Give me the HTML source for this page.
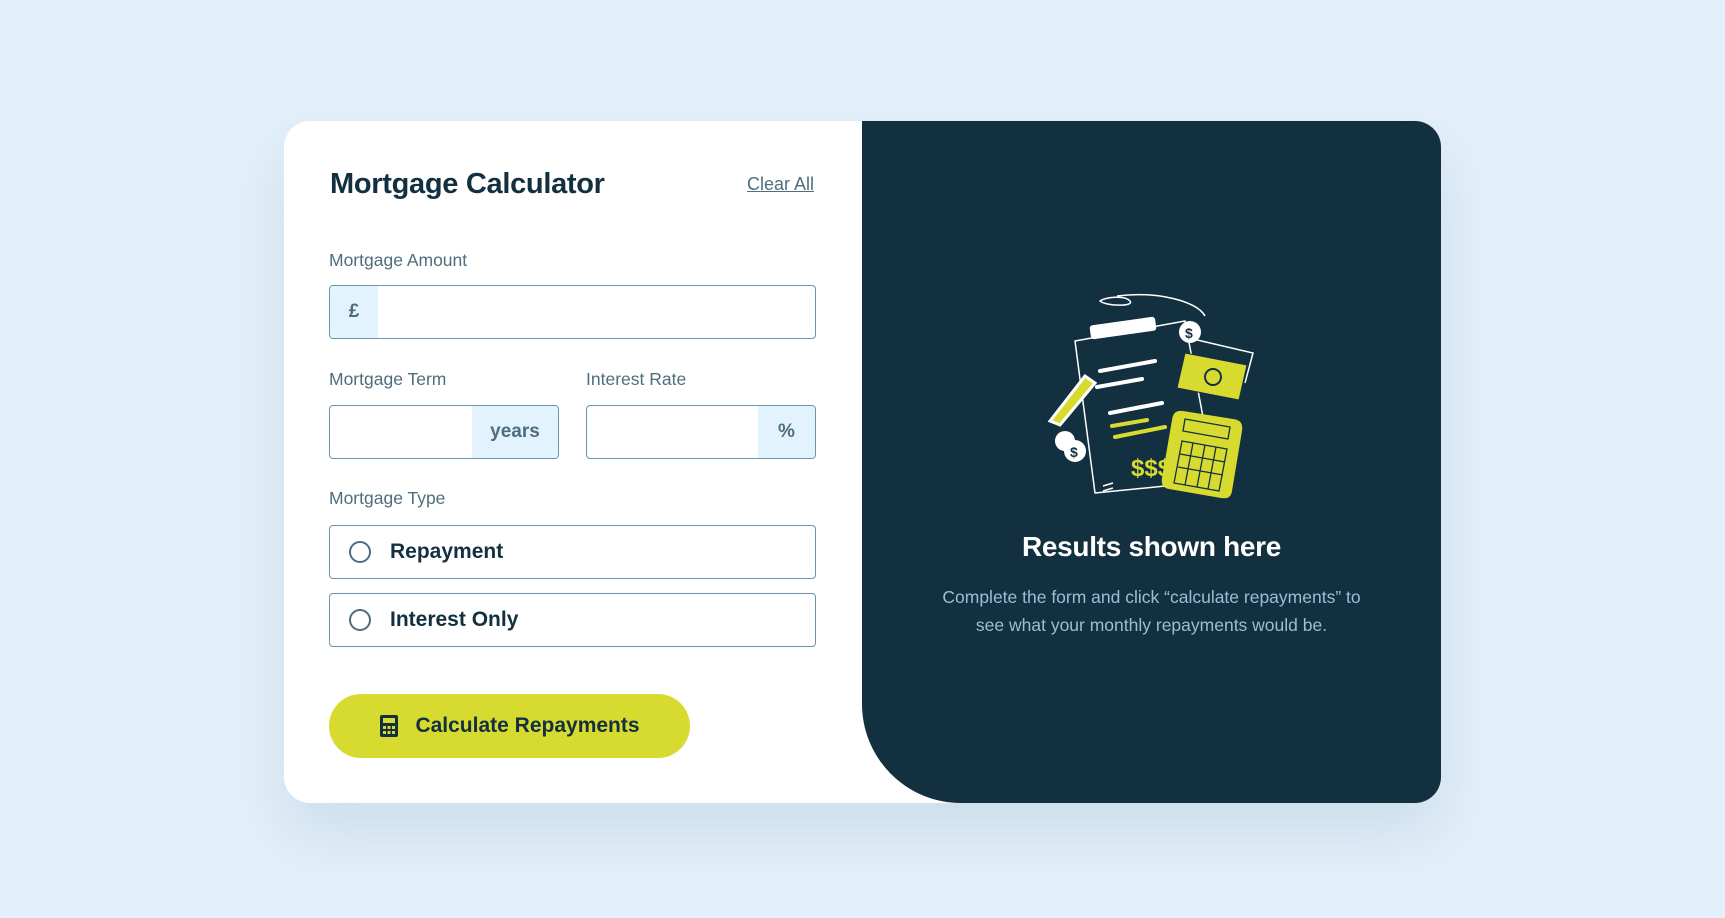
<!DOCTYPE html>
<html><head><meta charset="utf-8"><style>
*{box-sizing:border-box;margin:0;padding:0}
body{width:1725px;height:918px;background:#e3f0fa;font-family:"Liberation Sans",sans-serif;position:relative;overflow:hidden;color:#133041}
.card{position:absolute;left:284px;top:121px;width:1157px;height:682px;background:#fff;border-radius:26px;box-shadow:0 30px 60px rgba(100,140,170,.18);overflow:hidden}
.dark{position:absolute;left:578px;top:0;width:579px;height:682px;background:#133041;border-bottom-left-radius:99px}
.abs{position:absolute}
h1{position:absolute;left:46px;top:47px;font-size:29px;font-weight:bold;letter-spacing:-.3px}
.clear{left:463px;top:53px;font-size:18px;color:#4e6e7e;text-decoration:underline}
.lbl{font-size:17.5px;color:#4e6e7e}
.inp{position:absolute;border:1px solid #6b94a8;border-radius:4px;overflow:hidden}
.aff{position:absolute;top:0;bottom:0;background:#e3f3fd;color:#4e6e7e;font-weight:bold;font-size:19px;display:flex;align-items:center;justify-content:center}
.radio{position:absolute;left:45px;width:487px;height:54px;border:1px solid #6b94a8;border-radius:4px}
.radio i{position:absolute;left:19px;top:15px;width:22px;height:22px;border:2px solid #4e6e7e;border-radius:50%}
.radio span{position:absolute;left:60px;top:14px;font-size:21px;font-weight:bold}
.btn{position:absolute;left:45px;top:573px;width:361px;height:64px;border-radius:32px;background:#d8db2f;font-size:21px;font-weight:bold;display:flex;align-items:center;justify-content:center;gap:16px}
</style></head><body>
<div class="card">
<h1>Mortgage Calculator</h1>
<div class="abs clear">Clear All</div>
<div class="abs lbl" style="left:45px;top:129px">Mortgage Amount</div>
<div class="inp" style="left:45px;top:164px;width:487px;height:54px"><div class="aff" style="left:0;width:48px">£</div></div>
<div class="abs lbl" style="left:45px;top:248px">Mortgage Term</div>
<div class="abs lbl" style="left:302px;top:248px">Interest Rate</div>
<div class="inp" style="left:45px;top:284px;width:230px;height:54px"><div class="aff" style="right:0;width:86px">years</div></div>
<div class="inp" style="left:302px;top:284px;width:230px;height:54px"><div class="aff" style="right:0;width:57px">%</div></div>
<div class="abs lbl" style="left:45px;top:367px">Mortgage Type</div>
<div class="radio" style="top:404px"><i></i><span>Repayment</span></div>
<div class="radio" style="top:472px"><i></i><span>Interest Only</span></div>
<div class="btn"><svg width="20" height="22" viewBox="0 0 20 22"><rect x="1" y="0" width="18" height="22" rx="2" fill="#133041"/><rect x="4" y="3" width="12" height="5" fill="#d8db2f"/><g fill="#d8db2f"><rect x="4" y="11" width="3" height="3"/><rect x="8.5" y="11" width="3" height="3"/><rect x="13" y="11" width="3" height="3"/><rect x="4" y="16" width="3" height="3"/><rect x="8.5" y="16" width="3" height="3"/><rect x="13" y="16" width="3" height="3"/></g></svg>Calculate Repayments</div>
<div class="dark">
<svg class="abs" style="left:183px;top:170px" width="215" height="210" viewBox="0 0 215 210">
<g fill="none" stroke="#fff" stroke-width="1.5">
<path d="M55 10c5-4 25-6 30 0s-25 5-30 0z"/>
<path d="M72 5c40-5 80 5 88 20"/>
<path d="M30 50l110-20 30 160-120 12z" stroke-linejoin="round"/>
<path d="M148 48l60 14-8 30"/>
<path d="M58 195l10-3M58 200l10-3"/>
</g>
<rect x="45" y="30" width="66" height="14" rx="3" fill="#fff" transform="rotate(-8 78 37)"/>
<g stroke="#fff" stroke-width="4" stroke-linecap="round"><path d="M55 80l55-10M52 96l45-8M65 122l52-10"/></g>
<g stroke="#d8db2f" stroke-width="4" stroke-linecap="round"><path d="M67 135l35-6M70 146l50-10"/></g>
<path d="M5 130l35-45 10 7-35 42z" fill="#d8db2f" stroke="#fff" stroke-width="3"/>
<circle cx="145" cy="41" r="11" fill="#fff"/><text x="140" y="47" font-size="14" font-weight="bold" fill="#133041">$</text>
<circle cx="20" cy="150" r="10" fill="#fff"/><circle cx="30" cy="160" r="11" fill="#fff"/><text x="25" y="166" font-size="14" font-weight="bold" fill="#133041">$</text>
<path d="M140 62l62 12-8 35-62-12z" fill="#d8db2f" stroke="#133041" stroke-width="1"/>
<circle cx="168" cy="86" r="8" fill="none" stroke="#133041" stroke-width="2"/>
<text x="86" y="185" font-size="24" font-weight="bold" fill="#d8db2f">$$$</text>
<path d="M138 120l50 8c8 1 10 5 9 12l-10 60c-1 6-4 8-11 7l-52-9c-6-1-8-5-7-11l10-58c1-7 4-10 11-9z" fill="#d8db2f"/>
<g stroke="#133041" stroke-width="1.3" fill="none"><path d="M137 150l45 8-8 42-45-8z"/><path d="M148 152l-8 42M160 154l-8 42M171 156l-8 42M135 163l45 8M133 176l45 8"/><path d="M140 128l45 8-2 12-45-8z"/></g>
</svg>
<div class="abs" style="left:0;width:579px;top:410px;text-align:center;color:#fff;font-size:28px;font-weight:bold;letter-spacing:-.3px">Results shown here</div>
<div class="abs" style="left:20px;width:539px;top:462px;text-align:center;color:#9abed5;font-size:17.5px;line-height:28px">Complete the form and click “calculate repayments” to<br>see what your monthly repayments would be.</div>
</div>
</div>
</body></html>
